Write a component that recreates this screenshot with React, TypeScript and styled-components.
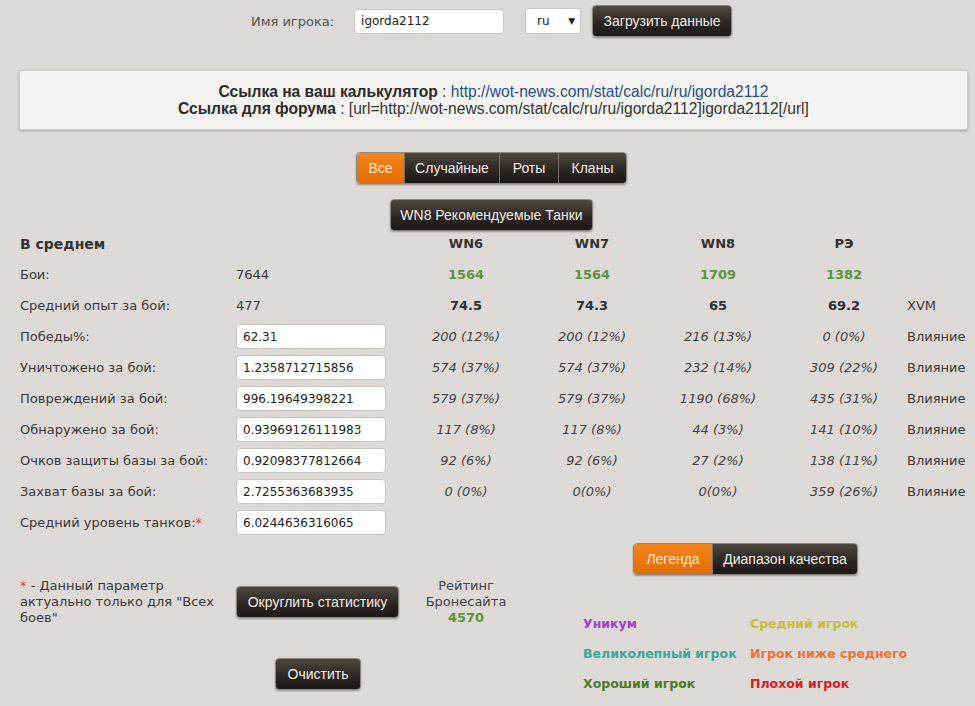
import { FunctionComponent } from 'react';
import styled, { createGlobalStyle, css } from 'styled-components';

const GlobalStyle = createGlobalStyle`
  html, body {
    margin: 0;
    padding: 0;
    background: #dcd9d6;
    overflow: hidden;
  }
  body {
    font-family: 'DejaVu Sans', Verdana, sans-serif;
    font-size: 13px;
    color: #3a3a3a;
  }
`;

const btnFont = `'Liberation Sans', Arial, sans-serif`;

const Page = styled.div`
  width: 975px;
  height: 706px;
  box-sizing: border-box;
  padding: 5px 0 0 8px;
`;

const TopRow = styled.div`
  display: flex;
  align-items: center;
  justify-content: center;
  height: 32px;
`;

const FieldLabel = styled.span`
  color: #555;
  margin-right: 20px;
`;

const TextInput = styled.div<{ $width: number }>`
  width: ${(p) => p.$width}px;
  height: 25px;
  box-sizing: border-box;
  background: #fff;
  border: 1px solid #c9c6c2;
  border-radius: 4px;
  display: flex;
  align-items: center;
  padding: 0 6px;
  font-size: 12px;
  color: #222;
`;

const FakeSelect = styled.div`
  width: 56px;
  height: 26px;
  box-sizing: border-box;
  margin: 0 11px 0 21px;
  background: #fff;
  border: 1px solid #c9c6c2;
  border-radius: 3px;
  display: flex;
  align-items: center;
  justify-content: space-between;
  padding: 0 5px 0 11px;
  font-size: 12px;
  color: #222;
  span {
    font-size: 9px;
  }
`;

const darkBtn = css`
  background: linear-gradient(#4f4843, #2a2521 60%, #1d1916);
  color: #f2eee9;
`;

const Button = styled.button<{ $width: number }>`
  ${darkBtn};
  width: ${(p) => p.$width}px;
  height: 32px;
  border: 1px solid #8c8781;
  border-radius: 4px;
  box-shadow: 0 1px 2px rgba(0, 0, 0, 0.35);
  font-family: ${btnFont};
  font-size: 14px;
  padding: 0;
  cursor: pointer;
`;

const LinkPanel = styled.div`
  margin: 33px 0 0 11px;
  width: 949px;
  height: 60px;
  box-sizing: border-box;
  background: #f4f3f1;
  border: 1px solid #cfccc8;
  border-radius: 3px;
  box-shadow: 0 1px 3px rgba(0, 0, 0, 0.25);
  display: flex;
  flex-direction: column;
  align-items: center;
  justify-content: center;
  font-family: 'Liberation Sans', Arial, sans-serif;
  font-size: 15.6px;
  line-height: 17px;
  color: #333;
  b {
    color: #2b2b2b;
  }
  a {
    color: #2a4f86;
    text-decoration: none;
  }
`;

const TabBar = styled.div<{ $top: number }>`
  display: inline-flex;
  margin-top: ${(p) => p.$top}px;
  height: 32px;
  border-radius: 4px;
  overflow: hidden;
  border: 1px solid #8c8781;
  box-shadow: 0 1px 2px rgba(0, 0, 0, 0.35);
  box-sizing: border-box;
`;

const Tab = styled.div<{ $active?: boolean; $width: number }>`
  width: ${(p) => p.$width}px;
  display: flex;
  align-items: center;
  justify-content: center;
  font-family: ${btnFont};
  font-size: 14px;
  ${(p) =>
    p.$active
      ? css`
          background: linear-gradient(#f3841c, #e36d05);
          color: #fde6cc;
        `
      : darkBtn}
  & + & {
    border-left: 1px solid #77716b;
  }
`;

const Centered = styled.div`
  display: flex;
  justify-content: center;
`;

const Table = styled.div`
  margin: -3px 0 0 12px;
  display: grid;
  grid-template-columns: 216px 167px repeat(4, 126px) auto;
  grid-auto-rows: 31px;
  align-items: center;
`;

const Cell = styled.div<{ $kind?: 'head' | 'num' | 'green' | 'ital' | 'bold' }>`
  text-align: ${(p) => (p.$kind ? 'center' : 'left')};
  ${(p) =>
    p.$kind === 'head' &&
    css`
      font-weight: bold;
      color: #333;
    `}
  ${(p) =>
    p.$kind === 'green' &&
    css`
      font-weight: bold;
      color: #5a953a;
    `}
  ${(p) =>
    p.$kind === 'bold' &&
    css`
      font-weight: bold;
      color: #2e2e2e;
    `}
  ${(p) =>
    p.$kind === 'ital' &&
    css`
      font-style: italic;
      color: #444;
    `}
`;

const Title = styled.div`
  font-weight: bold;
  font-size: 14px;
  color: #333;
`;

const Star = styled.span`
  color: #e23a3a;
`;

const Bottom = styled.div`
  display: flex;
  margin-left: 12px;
`;

const LeftBlock = styled.div`
  width: 563px;
  margin-top: 40px;
  display: grid;
  grid-template-columns: 216px 167px 126px;
  grid-template-rows: 48px auto;
  align-items: center;
`;

const Note = styled.div`
  width: 200px;
  line-height: 16px;
  color: #3a3a3a;
`;

const Rating = styled.div`
  text-align: center;
  line-height: 16px;
  color: #444;
  b {
    color: #5a953a;
  }
`;

const ClearCell = styled.div`
  grid-column: 2;
  margin-top: 23px;
  padding-left: 39px;
`;

const RightBlock = styled.div`
  padding-top: 5px;
`;

const LegendGrid = styled.div`
  margin-top: 33px;
  display: grid;
  grid-template-columns: 167px auto;
  grid-auto-rows: 30px;
  align-items: center;
  font-weight: bold;
  font-size: 12.5px;
`;

const LegendItem = styled.div<{ $color: string }>`
  color: ${(p) => p.$color};
`;

type Row = {
  label: string;
  value: string;
  input?: boolean;
  cols: string[];
  kind: 'green' | 'bold' | 'ital';
  tail: string;
};

const rows: Row[] = [
  { label: 'Бои:', value: '7644', cols: ['1564', '1564', '1709', '1382'], kind: 'green', tail: '' },
  { label: 'Средний опыт за бой:', value: '477', cols: ['74.5', '74.3', '65', '69.2'], kind: 'bold', tail: 'XVM' },
  { label: 'Победы%:', value: '62.31', input: true, cols: ['200 (12%)', '200 (12%)', '216 (13%)', '0 (0%)'], kind: 'ital', tail: 'Влияние' },
  { label: 'Уничтожено за бой:', value: '1.2358712715856', input: true, cols: ['574 (37%)', '574 (37%)', '232 (14%)', '309 (22%)'], kind: 'ital', tail: 'Влияние' },
  { label: 'Повреждений за бой:', value: '996.19649398221', input: true, cols: ['579 (37%)', '579 (37%)', '1190 (68%)', '435 (31%)'], kind: 'ital', tail: 'Влияние' },
  { label: 'Обнаружено за бой:', value: '0.93969126111983', input: true, cols: ['117 (8%)', '117 (8%)', '44 (3%)', '141 (10%)'], kind: 'ital', tail: 'Влияние' },
  { label: 'Очков защиты базы за бой:', value: '0.92098377812664', input: true, cols: ['92 (6%)', '92 (6%)', '27 (2%)', '138 (11%)'], kind: 'ital', tail: 'Влияние' },
  { label: 'Захват базы за бой:', value: '2.7255363683935', input: true, cols: ['0 (0%)', '0(0%)', '0(0%)', '359 (26%)'], kind: 'ital', tail: 'Влияние' },
];

const legend = [
  { text: 'Уникум', color: '#a43ccf' },
  { text: 'Средний игрок', color: '#c3bd35' },
  { text: 'Великолепный игрок', color: '#3ea595' },
  { text: 'Игрок ниже среднего', color: '#e6733c' },
  { text: 'Хороший игрок', color: '#4b7c24' },
  { text: 'Плохой игрок', color: '#d8201f' },
];

const StatsTable: FunctionComponent = () => (
  <Table>
    <Title>В среднем</Title>
    <div />
    {['WN6', 'WN7', 'WN8', 'РЭ'].map((h) => (
      <Cell key={h} $kind="head">
        {h}
      </Cell>
    ))}
    <div />
    {rows.map((r) => [
      <Cell key={`l-${r.label}`}>{r.label}</Cell>,
      r.input ? (
        <TextInput key={`v-${r.label}`} $width={150}>
          {r.value}
        </TextInput>
      ) : (
        <Cell key={`v-${r.label}`}>{r.value}</Cell>
      ),
      ...r.cols.map((c, i) => (
        <Cell key={`c-${r.label}-${i}`} $kind={r.kind}>
          {c}
        </Cell>
      )),
      <Cell key={`t-${r.label}`}>{r.tail}</Cell>,
    ])}
    <Cell>
      Средний уровень танков:<Star>*</Star>
    </Cell>
    <TextInput $width={150}>6.0244636316065</TextInput>
  </Table>
);

export default function App() {
  return (
    <Page>
      <GlobalStyle />
      <TopRow>
        <FieldLabel>Имя игрока:</FieldLabel>
        <TextInput $width={150}>igorda2112</TextInput>
        <FakeSelect>
          ru<span>▼</span>
        </FakeSelect>
        <Button $width={140}>Загрузить данные</Button>
      </TopRow>

      <LinkPanel>
        <div>
          <b>Ссылка на ваш калькулятор</b> : <a>http://wot-news.com/stat/calc/ru/ru/igorda2112</a>
        </div>
        <div>
          <b>Ссылка для форума</b> : [url=http://wot-news.com/stat/calc/ru/ru/igorda2112]igorda2112[/url]
        </div>
      </LinkPanel>

      <Centered>
        <TabBar $top={22}>
          <Tab $active $width={47}>Все</Tab>
          <Tab $width={94}>Случайные</Tab>
          <Tab $width={58}>Роты</Tab>
          <Tab $width={67}>Кланы</Tab>
        </TabBar>
      </Centered>
      <Centered>
        <Button $width={203} style={{ marginTop: 15 }}>
          WN8 Рекомендуемые Танки
        </Button>
      </Centered>

      <StatsTable />

      <Bottom>
        <LeftBlock>
          <Note>
            <Star>*</Star> - Данный параметр актуально только для "Всех боев"
          </Note>
          <Button $width={163}>Округлить статистику</Button>
          <Rating>
            Рейтинг
            <br />
            Бронесайта
            <br />
            <b>4570</b>
          </Rating>
          <ClearCell>
            <Button $width={86}>Очистить</Button>
          </ClearCell>
        </LeftBlock>
        <RightBlock>
          <TabBar $top={0} style={{ marginLeft: 50 }}>
            <Tab $active $width={78}>Легенда</Tab>
            <Tab $width={144}>Диапазон качества</Tab>
          </TabBar>
          <LegendGrid>
            {legend.map((l) => (
              <LegendItem key={l.text} $color={l.color}>
                {l.text}
              </LegendItem>
            ))}
          </LegendGrid>
        </RightBlock>
      </Bottom>
    </Page>
  );
}
